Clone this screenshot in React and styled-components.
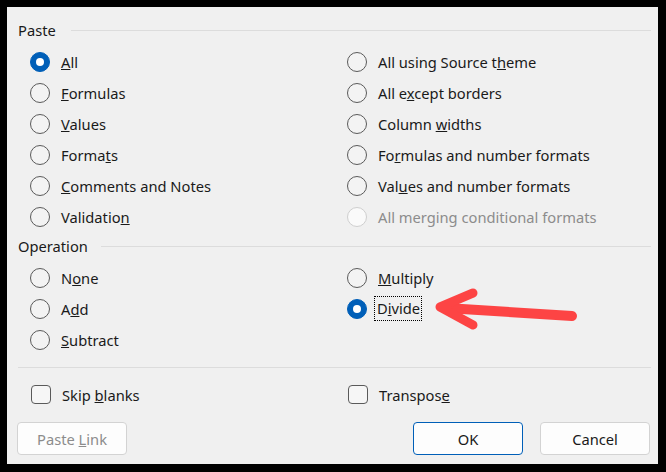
import React from 'react'
import styled, { createGlobalStyle } from 'styled-components'

const Global = createGlobalStyle`
  html, body {
    margin: 0;
    padding: 0;
    background: #000;
  }
  body {
    font-family: 'Noto Sans', 'Open Sans', sans-serif;
    color: #1a1a1a;
  }
`

const Page = styled.div`
  position: relative;
  width: 666px;
  height: 472px;
  padding: 7px 8px 8px 7px;
  box-sizing: border-box;
`

const Dialog = styled.div`
  width: 651px;
  height: 457px;
  box-sizing: border-box;
  background: #f0f0f0;
  padding: 13px 8px 8px 10px;
  display: flex;
  flex-direction: column;
  font-size: 14.7px;
`

const GroupHeader = styled.div`
  display: flex;
  align-items: center;
  height: 20px;
  line-height: 20px;
  padding-left: 1px;
  margin-top: ${({ $top }) => $top || 0}px;

  &::after {
    content: '';
    flex: 1;
    height: 1px;
    background: #dcdcdc;
    margin-left: ${({ $lineGap }) => $lineGap || 14}px;
    margin-right: -1px;
  }
`

const OptionGrid = styled.div`
  display: grid;
  grid-template-columns: 317px 1fr;
  grid-auto-rows: 31px;
  padding-left: 13px;
  margin-top: 6px;
`

const Option = styled.label`
  display: flex;
  align-items: center;
  gap: 11px;
  color: ${({ $disabled }) => ($disabled ? '#8c8c8c' : '#1a1a1a')};
  white-space: nowrap;
`

const Text = styled.span`
  ${({ $focus }) =>
    $focus &&
    `
    outline: 1px dotted #000;
    padding: 1px 1px 2px 2px;
    margin-left: -3px;
  `}
`

const RadioCircle = styled.span`
  width: 20px;
  height: 20px;
  box-sizing: border-box;
  border-radius: 50%;
  flex: none;
  display: flex;
  align-items: center;
  justify-content: center;
  border: 1px solid ${({ $checked, $disabled }) =>
    $checked ? '#005fb8' : $disabled ? '#cfcfcf' : '#5a5a5a'};
  background: ${({ $checked, $disabled }) =>
    $checked ? '#005fb8' : $disabled ? '#fafafa' : '#f3f3f3'};

  &::after {
    content: '';
    display: ${({ $checked }) => ($checked ? 'block' : 'none')};
    width: 8px;
    height: 8px;
    border-radius: 50%;
    background: #fff;
  }
`

const Divider = styled.div`
  height: 1px;
  background: #dcdcdc;
  margin: 12px -1px 0 1px;
`

const CheckRow = styled.div`
  display: grid;
  grid-template-columns: 317px 1fr;
  height: 31px;
  margin-top: 11px;
  padding-left: 14px;
`

const CheckBox = styled.span`
  width: 20px;
  height: 19px;
  box-sizing: border-box;
  border: 1px solid #5a5a5a;
  border-radius: 4px;
  background: #f6f6f6;
  flex: none;
`

const ButtonRow = styled.div`
  display: flex;
  align-items: center;
  margin-top: 12px;
  gap: 17px;
`

const Button = styled.button`
  width: 110px;
  height: 33px;
  box-sizing: border-box;
  border-radius: 4px;
  border: 1px solid ${({ $primary }) => ($primary ? '#005fb8' : '#d3d3d3')};
  background: #fdfdfd;
  font-family: inherit;
  font-size: 14.7px;
  color: ${({ disabled }) => (disabled ? '#8c8c8c' : '#1a1a1a')};
  padding: 0;

  &:first-child {
    margin-right: auto;
  }
`

const Arrow = styled.svg`
  position: absolute;
  left: 0;
  top: 0;
  pointer-events: none;
`

const Acc = ({ text, at, focus }) => (
  <Text $focus={focus}>
    {at == null ? (
      text
    ) : (
      <>
        {text.slice(0, at)}
        <u>{text.slice(at, at + 1)}</u>
        {text.slice(at + 1)}
      </>
    )}
  </Text>
)

const Radio = ({ label, at, checked, disabled, focus }) => (
  <Option $disabled={disabled}>
    <RadioCircle $checked={checked} $disabled={disabled} />
    <Acc text={label} at={at} focus={focus} />
  </Option>
)

const paste = [
  ['All', 0, true],
  ['All using Source theme', 18],
  ['Formulas', 0],
  ['All except borders', 5],
  ['Values', 0],
  ['Column widths', 7],
  ['Formats', 5],
  ['Formulas and number formats', 2],
  ['Comments and Notes', 0],
  ['Values and number formats', 3],
  ['Validation', 9],
  ['All merging conditional formats', null, false, true],
]

export default function App() {
  return (
    <Page>
      <Global />
      <Dialog>
        <GroupHeader $lineGap={15}>Paste</GroupHeader>
        <OptionGrid>
          {paste.map(([label, at, checked, disabled]) => (
            <Radio
              key={label}
              label={label}
              at={at}
              checked={checked}
              disabled={disabled}
            />
          ))}
        </OptionGrid>
        <GroupHeader $top={4} $lineGap={13}>Operation</GroupHeader>
        <OptionGrid>
          <Radio label="None" at={1} />
          <Radio label="Multiply" at={0} />
          <Radio label="Add" at={1} />
          <Radio label="Divide" at={1} checked focus />
          <Radio label="Subtract" at={0} />
        </OptionGrid>
        <Divider />
        <CheckRow>
          <Option>
            <CheckBox />
            <Acc text="Skip blanks" at={5} />
          </Option>
          <Option>
            <CheckBox />
            <Acc text="Transpose" at={8} />
          </Option>
        </CheckRow>
        <ButtonRow>
          <Button disabled>
            <Acc text="Paste Link" at={6} />
          </Button>
          <Button $primary>OK</Button>
          <Button>Cancel</Button>
        </ButtonRow>
      </Dialog>
      <Arrow width="666" height="472" viewBox="0 0 666 472">
        <path
          d="M572 316 L446 308"
          stroke="#fd4444"
          strokeWidth="10"
          strokeLinecap="round"
          fill="none"
        />
        <path
          d="M473 293 L440 307 L473 325"
          stroke="#fd4444"
          strokeWidth="9"
          strokeLinecap="round"
          strokeLinejoin="round"
          fill="none"
        />
      </Arrow>
    </Page>
  )
}
